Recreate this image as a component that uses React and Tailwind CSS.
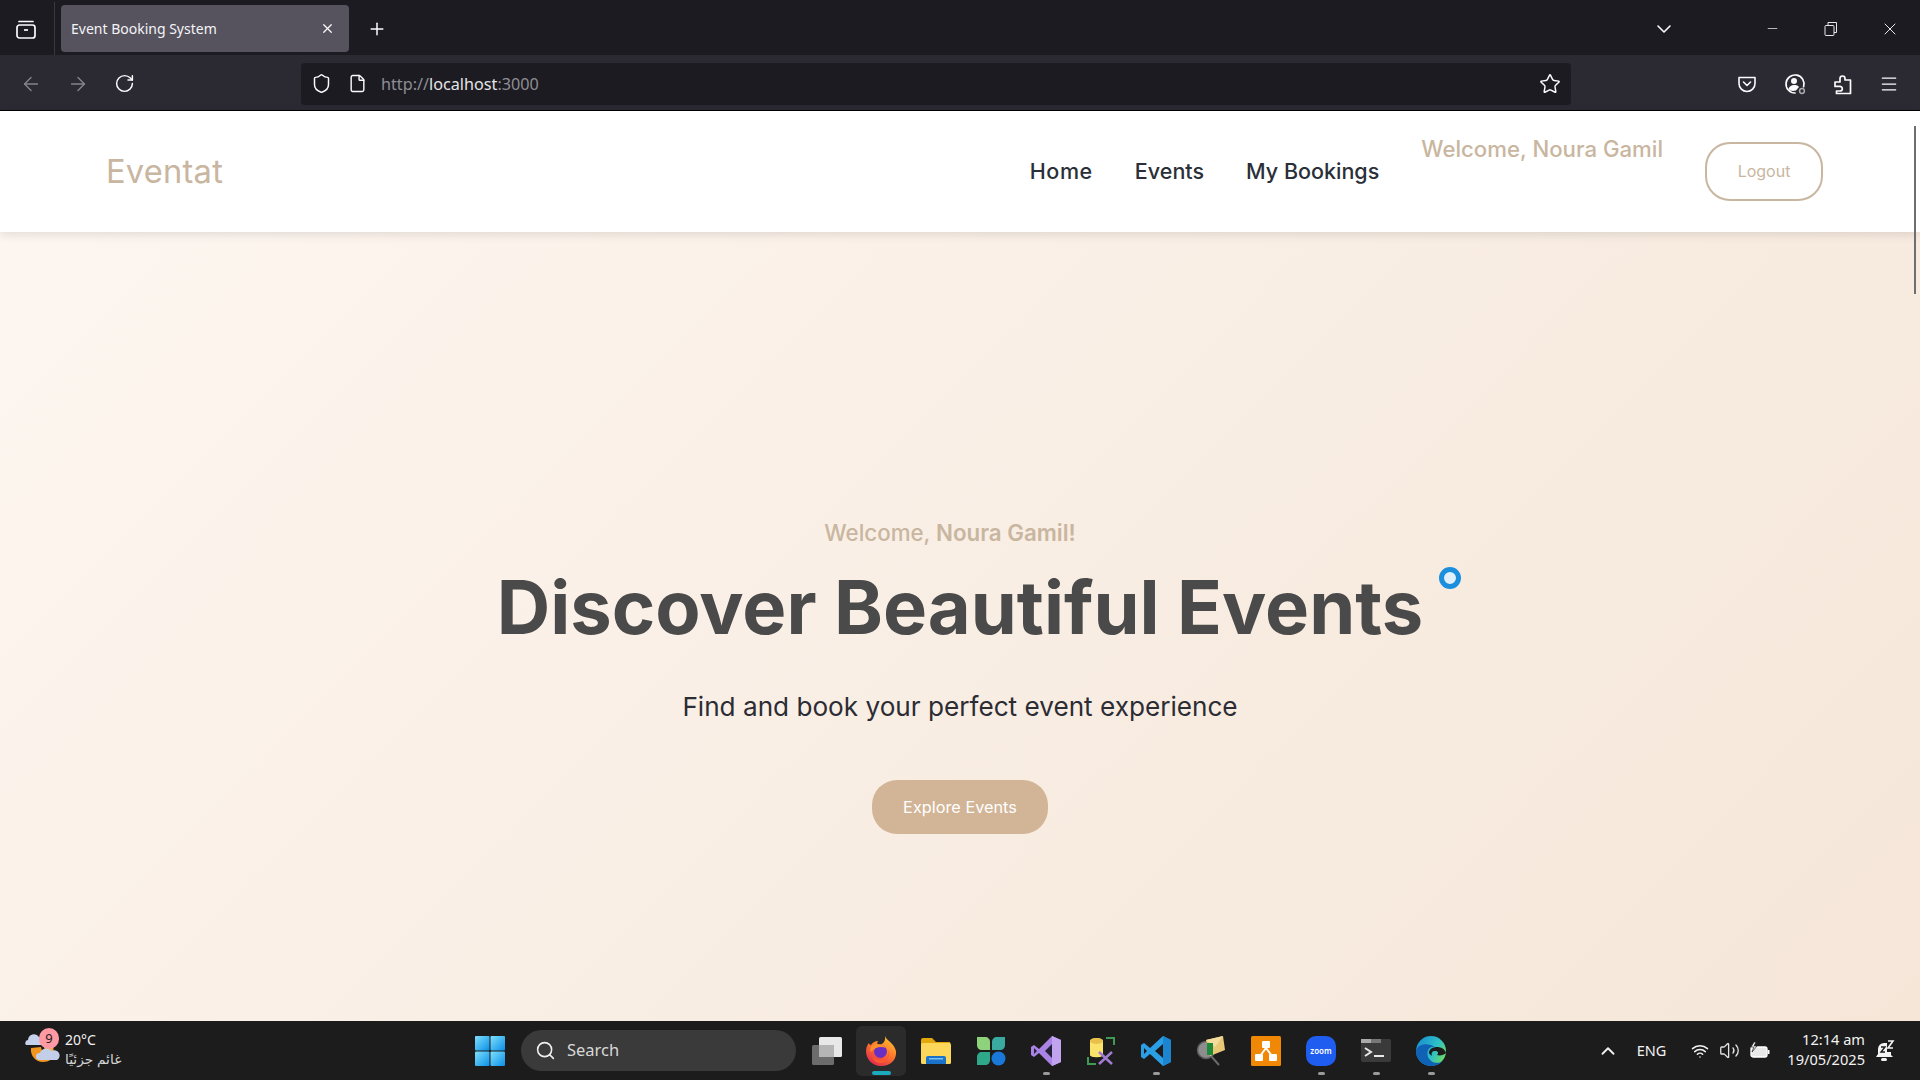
import React from "react";
import { ArrowLeft, ArrowRight, RotateCw, Shield, File, Star, Menu, ChevronDown, Minus, X, Plus, Search, ChevronUp, Wifi, Volume2 } from "lucide-react";

const Win = "font-['Noto_Sans','DejaVu_Sans',sans-serif]";
const Pop = "font-['Inter','Noto_Sans',sans-serif]";

function FirefoxView() {
  return (
    <svg width="22" height="22" viewBox="0 0 22 22" fill="none" stroke="#fbfbfe" strokeWidth="1.7">
      <rect x="2" y="7" width="18" height="13" rx="2.5" />
      <path d="M4 3.5h14" strokeLinecap="round" />
      <path d="M9 12h4" />
    </svg>
  );
}

function Restore() {
  return (
    <svg width="14" height="16" viewBox="0 0 14 16" fill="none" stroke="#e8e8ea" strokeWidth="1">
      <rect x="1" y="4.5" width="9" height="10" rx="1" />
      <path d="M4 4V1.5h8.5v10H10" />
    </svg>
  );
}

function Pocket() {
  return (
    <svg width="20" height="20" viewBox="0 0 20 20" fill="none" stroke="#fbfbfe" strokeWidth="1.6">
      <path d="M2 3.5h16v6a8 8 0 0 1-16 0z" strokeLinejoin="round" />
      <path d="M6.5 8l3.5 3.5L13.5 8" strokeLinecap="round" strokeLinejoin="round" />
    </svg>
  );
}

function Account() {
  return (
    <svg width="24" height="24" viewBox="0 0 24 24" fill="none">
      <path d="M12 21a9 9 0 1 1 8.6-6.3" stroke="#fbfbfe" strokeWidth="1.7" strokeLinecap="round" />
      <circle cx="11" cy="9" r="3" fill="#fbfbfe" />
      <path d="M5.5 17c1-3 3-4 5.500-4s4 .6 5 2l-3 3.500c-3 1-6 .5-7.500-1.500z" fill="#fbfbfe" />
      <circle cx="19" cy="19" r="2.400" stroke="#a9a9ae" strokeWidth="1.500" />
    </svg>
  );
}

function Extension() {
  return (
    <svg width="20" height="22" viewBox="0 0 20 22" fill="none" stroke="#fbfbfe" strokeWidth="1.7" strokeLinejoin="round">
      <path d="M2 9h5V5.500a2.500 2.500 0 0 1 5 0V7h5.500v13.500H3.500v-2.500H7a2.300 2.300 0 0 0 0-4.600H2z" />
    </svg>
  );
}

function Weather() {
  return (
    <svg width="44" height="44" viewBox="0 0 44 44">
      <path d="M7 20c-1 8 5 14 12 14 6 0 10-3 12-8-7 3-13 0-14-7z" fill="#f0961f" />
      <path d="M20 19l9-1 1 7-8 1z" fill="#f4b03a" />
      <path d="M2 17a3 3 0 0 1 2-5 6 6 0 0 1 11-3 4 4 0 0 1 4 8z" fill="#c6d2ec" />
      <path d="M15 32a3.500 3.500 0 0 1 1-7 7 7 0 0 1 12-2 4.500 4.500 0 0 1 5 9z" fill="#c3cfe9" />
    </svg>
  );
}

function StartIcon() {
  return (
    <svg width="30" height="30" viewBox="0 0 30 30">
      <defs>
        <linearGradient id="st" x1="0" y1="0" x2="1" y2="1">
          <stop offset="0" stopColor="#7fe0fb" />
          <stop offset="1" stopColor="#0a8fe8" />
        </linearGradient>
      </defs>
      <rect x="0" y="0" width="14.500" height="14.500" rx="1" fill="url(#st)" />
      <rect x="15.500" y="0" width="14.500" height="14.500" rx="1" fill="url(#st)" />
      <rect x="0" y="15.500" width="14.500" height="14.500" rx="1" fill="url(#st)" />
      <rect x="15.500" y="15.500" width="14.500" height="14.500" rx="1" fill="url(#st)" />
    </svg>
  );
}

function TaskView() {
  return (
    <svg width="32" height="30" viewBox="0 0 32 30">
      <rect x="8" y="1" width="23" height="20" rx="1.500" fill="#e8e8e8" />
      <rect x="1" y="9" width="22" height="20" rx="1.500" fill="#6c6c6c" />
      <rect x="8" y="9" width="15" height="12" fill="#b5b5b5" />
    </svg>
  );
}

function Firefox() {
  return (
    <svg width="32" height="32" viewBox="0 0 32 32">
      <defs>
        <linearGradient id="ff" x1="0.8" y1="0" x2="0.2" y2="1">
          <stop offset="0" stopColor="#ffc52e" />
          <stop offset="0.45" stopColor="#ff7a2b" />
          <stop offset="1" stopColor="#e0234f" />
        </linearGradient>
      </defs>
      <path d="M20 1c1 4 9 7 11 15 1 9-6 15-15 15C7 31 1 24 1 16c0-4 2-7 3-8 0 1 1 2 2 2 1-2 4-4 7-4-1 2-1 3 0 4 4 0 8-3 7-9z" fill="url(#ff)" />
      <circle cx="15.500" cy="16.500" r="6.500" fill="#6a2fc2" />
      <path d="M6 12c3-4 11-4 15 1-5-2-11-1-15 4-1-1-1-3 0-5z" fill="#ff8f2b" />
      <path d="M7 20c2 5 9 7 14 3 2-2 3-5 2-8 3 6-1 13-8 13-4 0-7-3-8-8z" fill="#ff5a2e" />
    </svg>
  );
}

function Folder() {
  return (
    <svg width="32" height="28" viewBox="0 0 32 28">
      <path d="M1 3a2 2 0 0 1 2-2h9l4 4h14v6H1z" fill="#e3a80c" />
      <rect x="1" y="6" width="30" height="21" rx="1.500" fill="#fcd75a" />
      <path d="M6 27v-6a2 2 0 0 1 2-2h16a2 2 0 0 1 2 2v6z" fill="#1a73c9" />
      <rect x="9" y="21" width="14" height="1.500" fill="#7cc0ef" />
    </svg>
  );
}

function Widget() {
  return (
    <svg width="30" height="30" viewBox="0 0 30 30">
      <path d="M1 1h8c3 0 5 2 5 5v8H6c-3 0-5-2-5-5z" fill="#8ed27c" />
      <path d="M16 6c0-3 2-5 5-5h8v8c0 3-2 5-5 5h-8z" fill="#3aa99f" />
      <path d="M1 21c0-3 2-5 5-5h8v8c0 3-2 5-5 5H1z" fill="#2fa88a" />
      <circle cx="22.500" cy="22.500" r="7" fill="#1a78d8" />
    </svg>
  );
}

function VS() {
  return (
    <svg width="32" height="32" viewBox="0 0 32 32">
      <path d="M22 1l9 4v22l-9 4L9 18l-5 4-3-2V12l3-2 5 4z" fill="#a983e6" />
      <path d="M22 9l-7 7 7 7z" fill="#26223a" />
      <path d="M4 13v6l3-3z" fill="#26223a" />
      <path d="M22 1l9 4v22l-9 4z" fill="#c2a3f0" />
    </svg>
  );
}

function DbTool() {
  return (
    <svg width="30" height="30" viewBox="0 0 30 30" fill="none">
      <path d="M20 2h8v7M2 21v7h8" stroke="#3f9a54" strokeWidth="2" />
      <path d="M4 5c0-4 13-4 13 0v14c0 3-13 3-13 0z" fill="#fbe36b" />
      <ellipse cx="10.500" cy="5" rx="6.500" ry="3" fill="#e9c14a" />
      <path d="M13 16l13 12M26 16L13 28" stroke="#a07bd0" strokeWidth="2.500" />
    </svg>
  );
}

function VSCode() {
  return (
    <svg width="32" height="32" viewBox="0 0 32 32">
      <path d="M23 1l8 4v22l-8 4L10 19l-6 5-3-2V10l3-2 6 5z" fill="#2a9fe6" />
      <path d="M23 9l-8 7 8 7z" fill="#1c1c1c" />
      <path d="M4 13v6l3-3z" fill="#1c1c1c" />
      <path d="M23 1l8 4v22l-8 4z" fill="#1b85cf" />
    </svg>
  );
}

function MailSearch() {
  return (
    <svg width="30" height="32" viewBox="0 0 30 32">
      <circle cx="10" cy="15" r="8.500" fill="#8d8d8d" stroke="#5c5c5c" strokeWidth="1.500" />
      <path d="M15 21l8 9" stroke="#6a6a6a" strokeWidth="2" />
      <path d="M10 5l17-4 2 14-15 6z" fill="#e9c976" />
      <path d="M10 5l9 7 8-11z" fill="#f3dd9e" />
      <path d="M11 8h6v12h-6z" fill="#1f8a3a" />
    </svg>
  );
}

function DrawIo() {
  return (
    <svg width="30" height="30" viewBox="0 0 30 30">
      <rect width="30" height="30" rx="1.500" fill="#f08705" />
      <path d="M15 12L9 20M15 12l6 8" stroke="#fff" strokeWidth="2" />
      <rect x="11" y="5" width="8" height="7" rx="1" fill="#fff" />
      <rect x="4" y="18" width="8" height="7" rx="1" fill="#fff" />
      <rect x="18" y="18" width="8" height="7" rx="1" fill="#fff" />
    </svg>
  );
}

function Terminal() {
  return (
    <svg width="30" height="24" viewBox="0 0 30 24">
      <rect width="30" height="23" rx="2" fill="#3a3a3a" />
      <rect width="10" height="4" fill="#aaaaaa" />
      <rect x="10" width="10" height="4" fill="#777" />
      <path d="M4 9l6 4-6 4" stroke="#e8e8e8" strokeWidth="2" fill="none" />
      <rect x="13" y="16" width="10" height="2" fill="#e8e8e8" />
    </svg>
  );
}

function Edge() {
  return (
    <svg width="32" height="32" viewBox="0 0 32 32">
      <defs>
        <linearGradient id="ed" x1="0" y1="0.2" x2="1" y2="0.7">
          <stop offset="0" stopColor="#1a8fd0" />
          <stop offset="0.6" stopColor="#2cc0c8" />
          <stop offset="1" stopColor="#6fdc5f" />
        </linearGradient>
      </defs>
      <circle cx="16" cy="16" r="15" fill="url(#ed)" />
      <path d="M1 16C2 9 13 7 20 12c-6-1-9 4-7 10 2 5 9 8 15 4-3 3-7 5-12 5C7 31 1 24 1 16z" fill="#0f62b4" />
      <path d="M14 18c0-4 4-6 8-6 4 0 8 2 9 6-2 2-6 3-9 2 2-2 1-4-2-4-3 0-4 2-3 5-1-1-3-2-3-3z" fill="#1c1c1c" />
    </svg>
  );
}

function Battery() {
  return (
    <svg width="22" height="18" viewBox="0 0 22 18" fill="none">
      <rect x="2" y="5" width="16" height="10" rx="2" fill="#e8e8e8" stroke="#fff" strokeWidth="1.300" />
      <rect x="18.500" y="8" width="2" height="4" fill="#fff" />
      <path d="M5 0L2 5h3l-2 5 5-6H5l2-4z" fill="#fff" stroke="#1c1c1c" strokeWidth="0.700" />
    </svg>
  );
}

function Bell() {
  return (
    <svg width="22" height="24" viewBox="0 0 22 24" fill="none">
      <path d="M3 10a6 6 0 0 1 6-6h3v9h4v3l2 2H1l2-3z" fill="#f3f3f3" />
      <rect x="6" y="19" width="6" height="3" rx="1.500" fill="#f3f3f3" />
      <path d="M6 8h4l-4 5h4" stroke="#1c1c1c" strokeWidth="1.400" />
      <path d="M13 2h5l-5 7h5" stroke="#f3f3f3" strokeWidth="1.600" />
    </svg>
  );
}

function TaskItem({ children, dot, active }) {
  return (
    <div className={`relative flex h-[50px] w-[50px] items-center justify-center rounded-md ${active ? "bg-[#2b2b2b]" : ""}`}>
      {children}
      {dot ? <span className="absolute bottom-[1px] h-[3px] w-[7px] rounded-full bg-[#9a9a9a]" /> : null}
      {active ? <span className="absolute bottom-[1px] h-[4px] w-[19px] rounded-full bg-[#1aa9bd]" /> : null}
    </div>
  );
}

export default function App() {
  return (
    <div className="flex h-screen w-full flex-col overflow-hidden bg-white">
      {/* tab strip */}
      <div className={`flex h-[55px] shrink-0 items-center bg-[#1c1b22] pt-[2px] ${Win}`}>
        <div className="flex h-full w-[55px] items-center justify-center border-r border-[#3a3940] pr-[2px]">
          <FirefoxView />
        </div>
        <div className="ml-[6px] flex h-[47px] w-[288px] items-center justify-between rounded-[4px] bg-[#56535f] pl-[10px] pr-[14px]">
          <span className="text-[14px] text-[#f4f4f6]">Event Booking System</span>
          <X size={15} color="#fbfbfe" strokeWidth={2} />
        </div>
        <div className="ml-[18px] flex items-center">
          <Plus size={20} color="#fbfbfe" strokeWidth={1.8} />
        </div>
        <div className="flex-1" />
        <ChevronDown size={24} color="#fbfbfe" strokeWidth={1.6} className="mr-[89px]" />
        <Minus size={15} color="#e8e8ea" strokeWidth={1.2} className="mr-[44px]" />
        <Restore />
        <X size={20} color="#e8e8ea" strokeWidth={1.2} className="ml-[42px] mr-[20px]" />
      </div>

      {/* toolbar */}
      <div className="flex h-[55px] shrink-0 items-center bg-[#2b2a33] pl-[20px] pr-[21px] pt-[2px]">
        <ArrowLeft size={22} color="#85848b" strokeWidth={1.5} />
        <ArrowRight size={22} color="#85848b" strokeWidth={1.5} className="ml-[25px]" />
        <RotateCw size={21} color="#fbfbfe" strokeWidth={1.7} className="ml-[25px]" />
        <div className="ml-[166px] flex h-[42px] w-[1270px] items-center rounded-[4px] bg-[#1c1b22] pl-[10px] pr-[10px]">
          <Shield size={21} color="#fbfbfe" strokeWidth={1.7} />
          <File size={19} color="#fbfbfe" strokeWidth={1.8} className="ml-[16px]" />
          <span className={`ml-[14px] mt-[2px] text-[16.2px] text-[#8f8e94] ${Win}`}>
            http://<span className="text-[#e4e4e6]">localhost</span>:3000
          </span>
          <div className="flex-1" />
          <Star size={22} color="#fbfbfe" strokeWidth={1.6} />
        </div>
        <div className="flex-1" />
        <div className="flex items-center gap-[26px]">
          <Pocket />
          <Account />
          <Extension />
          <Menu size={20} color="#fbfbfe" strokeWidth={1.5} />
        </div>
      </div>
      <div className="h-[1px] shrink-0 bg-black" />

      {/* page */}
      <div className={`relative flex min-h-0 flex-1 flex-col ${Pop}`}>
        <header className="relative z-10 flex h-[121px] shrink-0 items-center justify-between bg-white pl-[106px] pr-[97px] shadow-[0_2px_10px_rgba(0,0,0,0.12)]">
          <span className="mt-[1px] text-[32.7px] font-normal tracking-[0.2px] text-[#c8b6a0]">Eventat</span>
          <nav className="flex items-center gap-[42px]">
            <a className="text-[21.5px] font-medium tracking-[0.6px] text-[#2a2f38]">Home</a>
            <a className="text-[21.5px] font-medium text-[#2a2f38]">Events</a>
            <a className="text-[21.5px] font-medium text-[#2a2f38]">My Bookings</a>
            <span className="mb-[46px] text-[22.2px] font-medium text-[#c8b6a0]">Welcome, Noura Gamil</span>
            <button className="flex h-[59px] w-[118px] items-center justify-center rounded-[25px] border-2 border-[#c8b6a0] text-[16px] text-[#c8b6a0]">Logout</button>
          </nav>
        </header>

        <main className="flex flex-1 flex-col items-center justify-start bg-[linear-gradient(135deg,#fdf6f0,#f5e6d8)] pt-[285px]">
          <p className="mr-[20px] text-[22.3px] font-medium leading-[32px] text-[#c8b6a0]">
            Welcome, <b className="font-semibold">Noura Gamil!</b>
          </p>
          <h1 className="mt-[15px] text-[74px] font-bold leading-[86px] text-[#4a4a4a]">Discover Beautiful Events</h1>
          <p className="mt-[37px] text-[26.15px] leading-[40px] text-[#2c2c34]">Find and book your perfect event experience</p>
          <button className="mt-[53px] flex h-[54px] w-[176px] items-center justify-center rounded-[25px] bg-[#d2b596] text-[16.3px] text-white">Explore Events</button>
        </main>

        {/* page scrollbar */}
        <div className="absolute right-[4px] top-[15px] z-20 h-[168px] w-[2px] bg-[#6e6e6e]" />
        {/* busy cursor */}
        <div className="absolute left-[1439px] top-[456px] z-20 h-[22px] w-[22px] rounded-full border-[5px] border-[#1b8fdd] bg-[#dff0fb]" />
      </div>

      {/* taskbar */}
      <div className={`relative flex h-[59px] shrink-0 items-center bg-[#1c1c1c] ${Win}`}>
        <div className="absolute left-[24px] top-[4px] flex items-center">
          <div className="relative h-[48px] w-[40px]">
            <div className="absolute left-0 top-[3px]"><Weather /></div>
            <span className="absolute left-[15px] top-[3px] flex h-[21px] w-[20px] items-center justify-center rounded-full bg-[#ff99a4] text-[13px] text-[#1c1c1c]">9</span>
          </div>
          <div className="ml-[1px] flex flex-col text-[#f2f2f2]">
            <span className="text-[14px] leading-[20px]">20°C</span>
            <span className="text-[13.8px] leading-[18px] text-[#d4d4d4]">غائم جزئيًا</span>
          </div>
        </div>

        <div className="ml-[472px] flex items-center">
          <div className="flex w-[35px] justify-start pl-[3px]"><StartIcon /></div>
          <div className="ml-[14px] flex h-[41px] w-[275px] items-center rounded-full bg-[#3a3a3a] pl-[14px] text-[16.5px] text-[#d8d8d8]">
            <Search size={21} color="#efefef" strokeWidth={1.8} />
            <span className="ml-[11px]">Search</span>
          </div>
          <div className="ml-[6px] flex items-center">
            <TaskItem><TaskView /></TaskItem>
            <div className="ml-[4px]"><TaskItem active><Firefox /></TaskItem></div>
            <div className="ml-[5px]"><TaskItem><Folder /></TaskItem></div>
            <div className="ml-[5px]"><TaskItem><Widget /></TaskItem></div>
            <div className="ml-[5px]"><TaskItem dot><VS /></TaskItem></div>
            <div className="ml-[5px]"><TaskItem><DbTool /></TaskItem></div>
            <div className="ml-[5px]"><TaskItem dot><VSCode /></TaskItem></div>
            <div className="ml-[5px]"><TaskItem><MailSearch /></TaskItem></div>
            <div className="ml-[5px]"><TaskItem><DrawIo /></TaskItem></div>
            <div className="ml-[5px]">
              <TaskItem dot>
                <div className="flex h-[30px] w-[30px] items-center justify-center rounded-[10px] bg-[#1f5cf0] text-[8px] font-semibold text-white">zoom</div>
              </TaskItem>
            </div>
            <div className="ml-[5px]"><TaskItem dot><Terminal /></TaskItem></div>
            <div className="ml-[5px]"><TaskItem dot><Edge /></TaskItem></div>
          </div>
        </div>

        <div className="flex-1" />
        <div className="flex items-center pr-[23px] text-[#f2f2f2]">
          <ChevronUp size={22} color="#f2f2f2" strokeWidth={2} />
          <span className="ml-[18px] text-[14.5px]">ENG</span>
          <Wifi size={18} color="#f2f2f2" strokeWidth={2} className="ml-[25px]" />
          <Volume2 size={21} color="#e4e4e4" strokeWidth={1.5} className="ml-[10px]" />
          <div className="ml-[9px]"><Battery /></div>
          <div className="ml-[16px] mb-[3px] flex flex-col items-end text-[14.6px] leading-[20px]">
            <span>12:14 am</span>
            <span>19/05/2025</span>
          </div>
          <div className="ml-[10px]"><Bell /></div>
        </div>
      </div>
    </div>
  );
}
